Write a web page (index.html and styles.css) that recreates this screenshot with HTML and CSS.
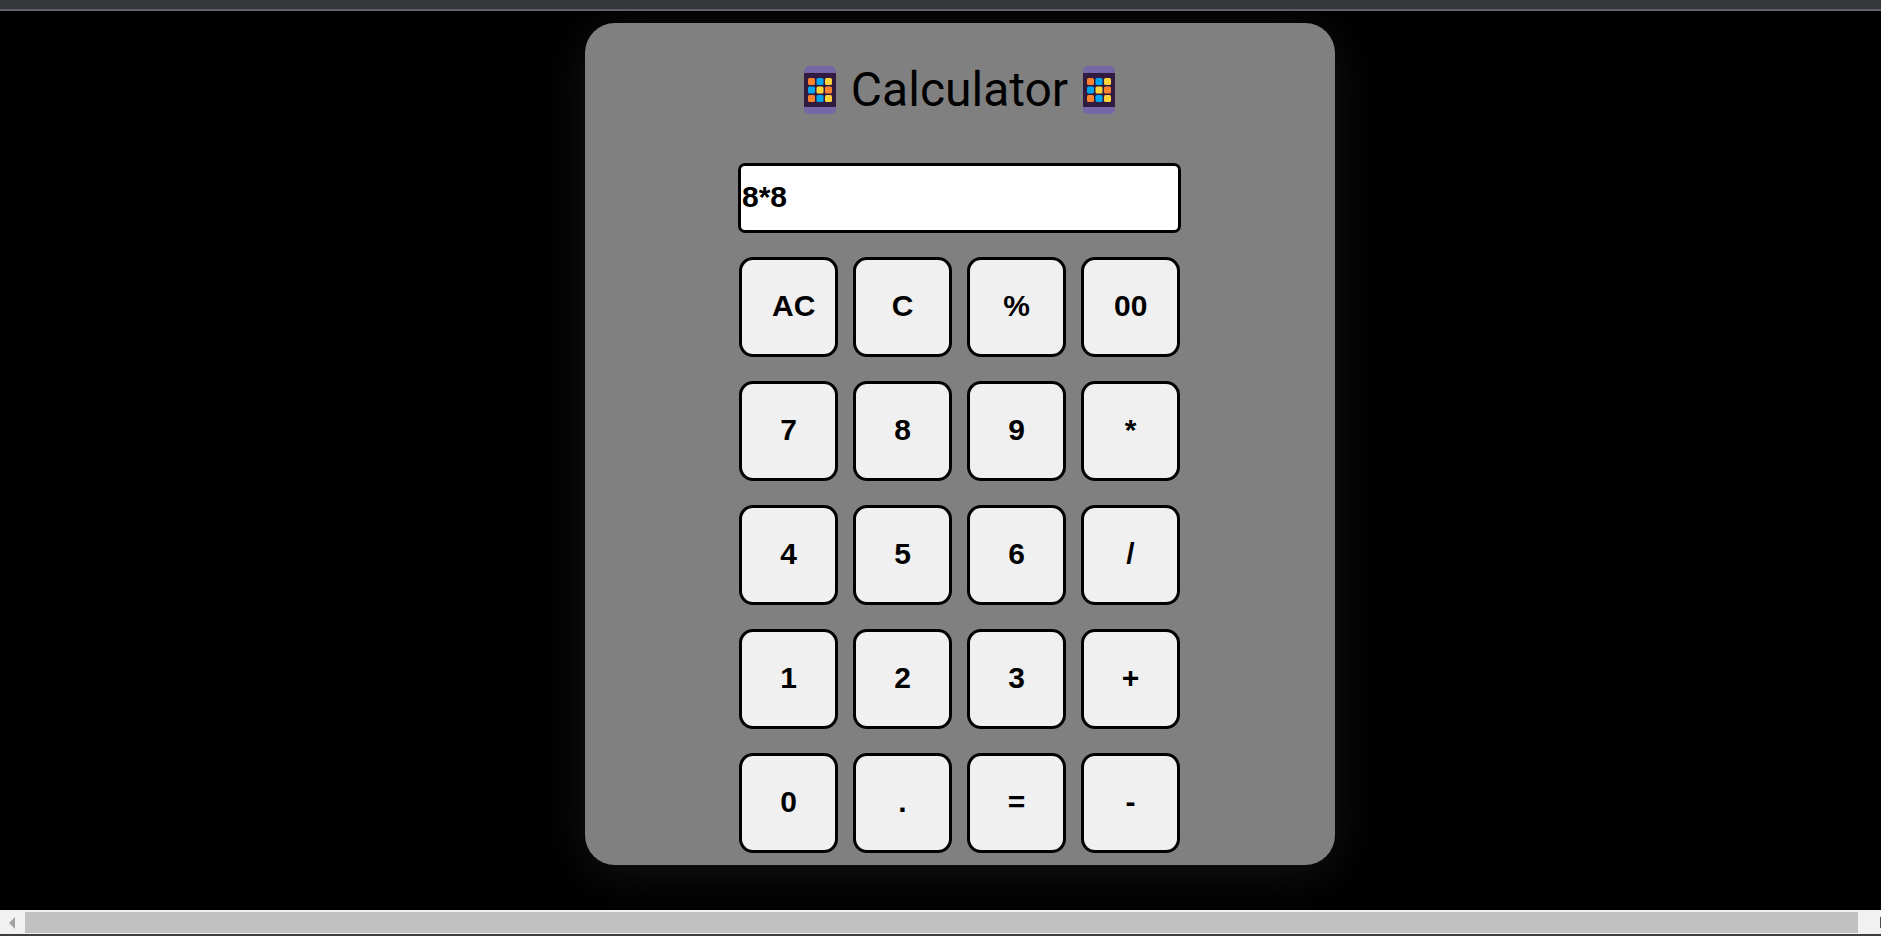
FILE: index.html
```html
<!DOCTYPE html>
<html lang="en">
<head>
<meta charset="utf-8">
<title>Calculator</title>
<link rel="stylesheet" href="styles.css">
</head>
<body>
<svg class="sprite" aria-hidden="true">
  <symbol id="keypad" viewBox="0 0 32 48">
    <rect width="32" height="48" rx="5" fill="#7566a6"/>
    <rect y="7" width="32" height="34" fill="#321b41"/>
    <g fill="#ff822d"><rect x="4" y="12" width="7" height="7" rx="1.5"/><rect x="21" y="20.5" width="7" height="7" rx="1.5"/><rect x="4" y="29" width="7" height="7" rx="1.5"/></g>
    <g fill="#00a6ed"><rect x="12.5" y="12" width="7" height="7" rx="1.5"/><rect x="4" y="20.5" width="7" height="7" rx="1.5"/><rect x="12.5" y="29" width="7" height="7" rx="1.5"/></g>
    <g fill="#ffd43b"><rect x="21" y="12" width="7" height="7" rx="1.5"/><rect x="12.5" y="20.5" width="7" height="7" rx="1.5"/><rect x="21" y="29" width="7" height="7" rx="1.5"/></g>
  </symbol>
</svg>
<div class="toolbar-edge"></div>
<main class="stage">
  <section class="calculator">
    <h1 class="title">
      <svg class="title-icon" aria-hidden="true"><use href="#keypad"/></svg>
      <span>Calculator</span>
      <svg class="title-icon" aria-hidden="true"><use href="#keypad"/></svg>
    </h1>
    <input class="display" type="text" value="8*8" aria-label="Expression">
    <div class="keys">
      <button class="key">AC</button><button class="key">C</button><button class="key">%</button><button class="key">00</button>
      <button class="key">7</button><button class="key">8</button><button class="key">9</button><button class="key">*</button>
      <button class="key">4</button><button class="key">5</button><button class="key">6</button><button class="key">/</button>
      <button class="key">1</button><button class="key">2</button><button class="key">3</button><button class="key">+</button>
      <button class="key">0</button><button class="key">.</button><button class="key">=</button><button class="key">-</button>
    </div>
  </section>
</main>
<div class="scrollbar" aria-hidden="true">
  <svg class="arrow" viewBox="0 0 25 21"><path d="M15 5v12l-6-6z" fill="#a3a3a3"/></svg>
  <div class="thumb"></div>
  <svg class="arrow-end" viewBox="0 0 23 21"><path d="M22 5h1v11h-1z" fill="#505050"/></svg>
</div>
</body>
</html>
```
FILE: styles.css
```css
* {
  box-sizing: border-box;
}

body {
  margin: 0;
  min-height: 100vh;
  display: flex;
  flex-direction: column;
  background: #000;
  font-family: "Liberation Sans", Arial, sans-serif;
}

.sprite {
  display: none;
}

.toolbar-edge {
  height: 11px;
  background: #35363a;
  border-bottom: 2px solid #5f6368;
}

.stage {
  flex: 1;
  display: flex;
  justify-content: center;
  align-items: flex-start;
  padding: 12px 0 45px 39px;
  overflow: hidden;
}

.calculator {
  display: flex;
  flex-direction: column;
  align-items: center;
  width: 100%;
  max-width: 750px;
  padding: 31px 1px 12px 0;
  border-radius: 30px;
  background: #808080;
  box-shadow: 0 8px 50px rgba(255, 255, 255, 0.08);
}

.title {
  display: flex;
  align-items: center;
  gap: 15px;
  margin: 0 0 37px;
  color: #000;
  font: 400 48px/72px Roboto, sans-serif;
}

.title-icon {
  width: 32px;
  height: 48px;
}

.display {
  width: 443px;
  height: 70px;
  margin-bottom: 24px;
  padding: 0 1px 2px;
  border: 3px solid #000;
  border-radius: 7px;
  background: #fff;
  color: #000;
  font: bold 30px "Liberation Sans", Arial, sans-serif;
}

.keys {
  display: grid;
  grid-template-columns: repeat(4, 99px);
  gap: 24px 15px;
}

.key {
  height: 100px;
  padding: 0 30px 2px;
  border: 3px solid #000;
  border-radius: 14px;
  background: #f0f0f0;
  color: #000;
  font: bold 30px "Liberation Sans", Arial, sans-serif;
}

.scrollbar {
  display: flex;
  height: 26px;
  padding: 2px 0 1px;
  background: #f1f1f1;
  border-bottom: 2px solid #3c3d41;
}

.arrow {
  width: 25px;
  height: 21px;
}

.thumb {
  flex: 1;
  background: #c1c1c1;
}

.arrow-end {
  width: 23px;
  height: 21px;
}
```
